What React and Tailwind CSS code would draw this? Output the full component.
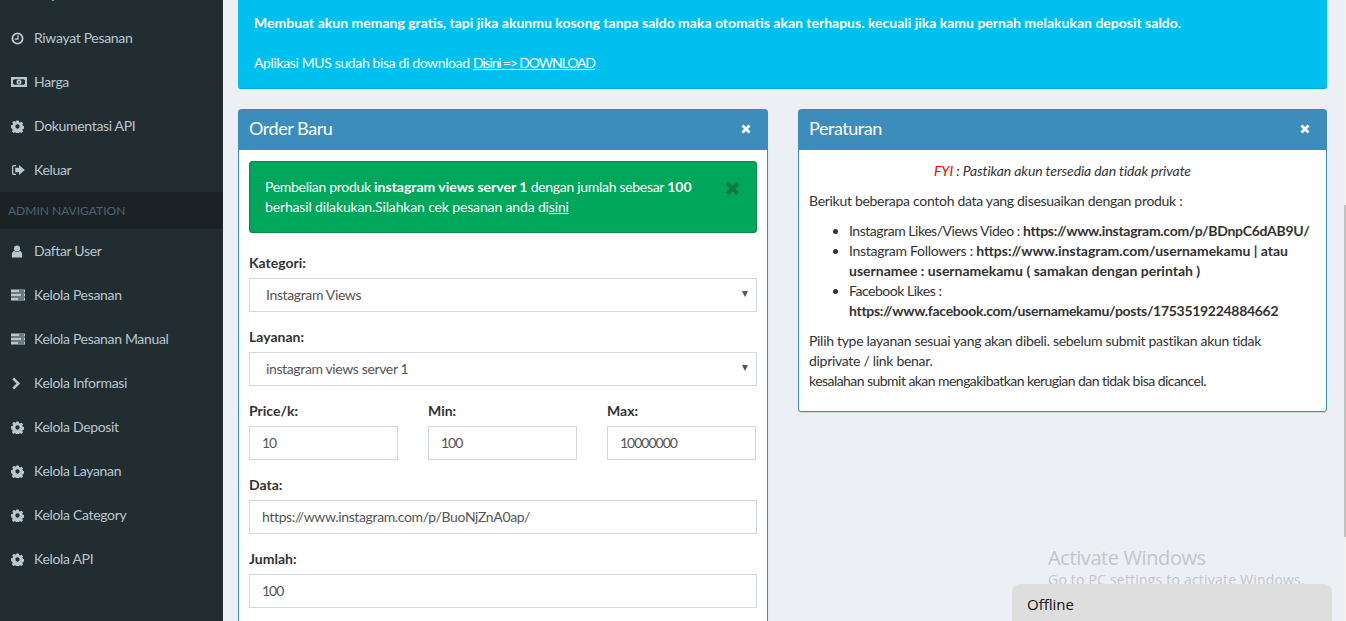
const FONT = "font-['Lato','Liberation_Sans',sans-serif]";

function Gear() {
  return (
    <svg viewBox="0 0 14 14" className="w-[13px] h-[13px]" fill="currentColor">
      <path fillRule="evenodd" d="M5.7 0.5h2.6l.4 1.7 1.1.5 1.5-.9 1.8 1.8-.9 1.5.5 1.1 1.7.4v2.6l-1.7.4-.5 1.1.9 1.5-1.8 1.8-1.5-.9-1.1.5-.4 1.7H5.7l-.4-1.7-1.1-.5-1.5.9-1.8-1.8.9-1.5-.5-1.1L0 8.3V5.7l1.7-.4.5-1.1-.9-1.5 1.8-1.8 1.5.9 1.1-.5zM7 4.7a2.3 2.3 0 1 0 0 4.6 2.3 2.3 0 0 0 0-4.6z" />
    </svg>
  );
}

function Clock() {
  return (
    <svg viewBox="0 0 14 14" className="w-[13px] h-[13px]" fill="none" stroke="currentColor">
      <circle cx="7" cy="7" r="5.5" strokeWidth="2" />
      <path d="M7.5 3.5V7.5H4" strokeWidth="1.5" />
    </svg>
  );
}

function Money() {
  return (
    <svg viewBox="0 0 16 12" className="w-[16px] h-[12px]" fill="currentColor">
      <path fillRule="evenodd" d="M0 1h16v10H0zM3 3.2a1.5 1.5 0 0 1-1 1v3.6a1.5 1.5 0 0 1 1 1h10a1.5 1.5 0 0 1 1-1V4.2a1.5 1.5 0 0 1-1-1zM8 3.5a2.5 2.5 0 1 1 0 5 2.5 2.5 0 0 1 0-5z" />
      <path d="M7.5 5h1v2.5h-1z" fill="#222d32" />
    </svg>
  );
}

function Logout() {
  return (
    <svg viewBox="0 0 14 12" className="w-[14px] h-[12px]" fill="currentColor">
      <path d="M5 1H2.5A1.5 1.5 0 0 0 1 2.5v7A1.5 1.5 0 0 0 2.5 11H5V9.7H2.5l-.2-.2V2.5l.2-.2H5z" />
      <path d="M8 1 13.8 6 8 11V8.2H4.2V3.8H8z" />
    </svg>
  );
}

function User() {
  return (
    <svg viewBox="0 0 12 14" className="w-[12px] h-[13px]" fill="currentColor">
      <circle cx="6" cy="3.8" r="3.3" />
      <path d="M0.5 13.5V10c0-2 1.3-3.3 2.8-3.5C4 7 5 7.5 6 7.5S8 7 8.7 6.5c1.5.2 2.8 1.5 2.8 3.5v3.5z" />
    </svg>
  );
}

function Tasks() {
  return (
    <svg viewBox="0 0 14 12" className="w-[14px] h-[12px]" fill="currentColor">
      <path fillRule="evenodd" d="M0 0.5h14v3H0zM8 1.5v1h5v-1zM0 4.5h14v3H0zM10 5.5v1h3v-1zM0 8.5h14v3H0zM7 9.5v1h6v-1z" />
    </svg>
  );
}

function Chevron() {
  return (
    <svg viewBox="0 0 10 14" className="w-[10px] h-[13px]" fill="none" stroke="currentColor" strokeWidth="2.8">
      <path d="M2 1.5 7.5 7 2 12.5" />
    </svg>
  );
}

function Times({ className }) {
  return (
    <svg viewBox="0 0 10 10" className={className} fill="none" stroke="currentColor" strokeWidth="2.8">
      <path d="M1.5 1.5 8.5 8.5M8.5 1.5 1.5 8.5" />
    </svg>
  );
}

function MenuItem({ icon, label }) {
  return (
    <a className="flex items-center h-[44px] pl-[11px] text-[#b8c7ce] text-[14px] tracking-[-0.33px]">
      <span className="w-[23px] flex items-center">{icon}</span>
      <span className="pb-[2px]">{label}</span>
    </a>
  );
}

function Field({ label, children }) {
  return (
    <div className="mb-[15px]">
      <label className="block font-bold text-[14px] leading-[20px] mb-[5px] text-[#333] tracking-normal">{label}</label>
      {children}
    </div>
  );
}

function TextBox({ value, numeric }) {
  return (
    <div className={`h-[34px] border border-[#d2d6de] px-[12px] pb-[2px] flex items-center text-[14px] text-[#555] ${numeric ? 'tracking-[-1px]' : 'tracking-[-0.37px]'}`}>{value}</div>
  );
}

function SelectBox({ value }) {
  return (
    <div className="h-[34px] border border-[#d2d6de] pl-[16px] pr-[8px] pb-[2px] flex items-center justify-between text-[14px] text-[#555] tracking-[-0.37px]">
      <span>{value}</span>
      <span className="w-0 h-0 border-x-[3px] border-x-transparent border-t-[6px] border-t-[#555]"></span>
    </div>
  );
}

function Panel({ title, children }) {
  return (
    <div className="border border-[#3c8dbc] rounded-[3px] bg-white shadow-[0_1px_1px_rgba(0,0,0,0.1)]">
      <div className="h-[40px] bg-[#3c8dbc] text-white flex items-center justify-between pl-[10px] pr-[16px]">
        <h3 className="text-[18px] tracking-[-0.45px] pb-[4px]">{title}</h3>
        <Times className="w-[10px] h-[10px] mb-[2px]" />
      </div>
      {children}
    </div>
  );
}

export default function App() {
  return (
    <div className={`h-[621px] w-[1346px] overflow-hidden flex bg-[#ecf0f5] ${FONT}`}>
      <aside className="w-[223px] shrink-0 bg-[#222d32] -mt-[28px]">
        <MenuItem icon={<Tasks />} label="Deposit" />
        <MenuItem icon={<Clock />} label="Riwayat Pesanan" />
        <MenuItem icon={<Money />} label="Harga" />
        <MenuItem icon={<Gear />} label="Dokumentasi API" />
        <MenuItem icon={<Logout />} label="Keluar" />
        <div className="h-[37px] bg-[#1a2226] text-[#4b646f] text-[12px] pl-[8px] flex items-center">ADMIN NAVIGATION</div>
        <MenuItem icon={<User />} label="Daftar User" />
        <MenuItem icon={<Tasks />} label="Kelola Pesanan" />
        <MenuItem icon={<Tasks />} label="Kelola Pesanan Manual" />
        <MenuItem icon={<Chevron />} label="Kelola Informasi" />
        <MenuItem icon={<Gear />} label="Kelola Deposit" />
        <MenuItem icon={<Gear />} label="Kelola Layanan" />
        <MenuItem icon={<Gear />} label="Kelola Category" />
        <MenuItem icon={<Gear />} label="Kelola API" />
      </aside>

      <main className="relative flex-1 min-w-0 pl-[15px] pr-[17px] text-[#333] text-[14px] tracking-[-0.3px]">
        <div className="h-[89px] bg-[#00c0ef] border-b border-[#00acd6] rounded-b-[3px] text-white pl-[16px] pt-[13px]">
          <p className="font-bold leading-[20px] mb-[20px] tracking-normal">
            Membuat akun memang gratis, tapi jika akunmu kosong tanpa saldo maka otomatis akan terhapus. kecuali jika kamu pernah melakukan deposit saldo.
          </p>
          <p className="leading-[20px] tracking-[-0.37px]">
            Aplikasi MUS sudah bisa di download <a className="underline tracking-[-1.15px]">Disini =&gt; DOWNLOAD</a>
          </p>
        </div>

        <div className="flex gap-[30px] mt-[20px] items-start">
          <div className="w-[530px] shrink-0">
            <Panel title="Order Baru">
              <div className="px-[10px] pt-[11px] pb-[10px]">
                <div className="h-[72px] mb-[20px] rounded-[3px] bg-[#00a65a] border border-[#008d4c] text-white pl-[15px] pr-[16px] py-[15px] flex justify-between">
                  <p className="leading-[20px] w-[440px]">
                    Pembelian produk <b className="tracking-normal">instagram views server 1</b> dengan jumlah sebesar <b className="tracking-normal">100</b><br />
                    <span className="tracking-[-0.15px]">berhasil dilakukan.Silahkan cek pesanan anda di<a className="underline">sini</a></span>
                  </p>
                  <Times className="w-[15px] h-[15px] text-[#0f7a47] mt-[4px]" />
                </div>
                <Field label="Kategori:"><SelectBox value="Instagram Views" /></Field>
                <Field label="Layanan:"><SelectBox value="instagram views server 1" /></Field>
                <div className="grid grid-cols-[149px_149px_149px] gap-x-[30px]">
                  <Field label="Price/k:"><TextBox value="10" numeric /></Field>
                  <Field label="Min:"><TextBox value="100" numeric /></Field>
                  <Field label="Max:"><TextBox value="10000000" numeric /></Field>
                </div>
                <Field label="Data:"><TextBox value="https://www.instagram.com/p/BuoNjZnA0ap/" /></Field>
                <Field label="Jumlah:"><TextBox value="100" numeric /></Field>
              </div>
            </Panel>
          </div>

          <div className="flex-1 min-w-0">
            <Panel title="Peraturan">
              <div className="px-[10px] pt-[11px] pb-[10px] leading-[20px]">
                <p className="italic text-center mb-[10px] tracking-[-0.1px]"><span className="text-[#ff0000]">FYI</span> : Pastikan akun tersedia dan tidak private</p>
                <p className="mb-[10px]">Berikut beberapa contoh data yang disesuaikan dengan produk :</p>
                <ul className="list-disc pl-[40px] mb-[10px]">
                  <li><span className="tracking-[-0.47px]">Instagram Likes/Views Video : </span><b>https://www.instagram.com/p/BDnpC6dAB9U/</b></li>
                  <li>Instagram Followers : <b className="tracking-normal">https://www.instagram.com/usernamekamu | atau usernamee : usernamekamu ( samakan dengan perintah )</b></li>
                  <li><span className="tracking-[-0.47px]">Facebook Likes : </span><b>https://www.facebook.com/usernamekamu/posts/1753519224884662</b></li>
                </ul>
                <p className="mb-[10px]">Pilih type layanan sesuai yang akan dibeli. sebelum submit pastikan akun tidak<br />diprivate / link benar.<br /><span className="tracking-[-0.55px]">kesalahan submit akan mengakibatkan kerugian dan tidak bisa dicancel.</span></p>
              </div>
            </Panel>
          </div>
        </div>

        <div className="absolute left-[825px] top-[545px] text-[#c4c6c9] font-['Open_Sans',sans-serif]">
          <div className="text-[20px] leading-[26px] tracking-[-0.4px]">Activate Windows</div>
          <div className="text-[14px] leading-[18px] tracking-[0.2px]">Go to PC settings to activate Windows.</div>
        </div>
        <div className="absolute left-[789px] top-[584px] w-[320px] h-[40px] rounded-t-[8px] bg-[#dedede] text-[#111] text-[15px] tracking-normal pl-[15px] pt-[9px] font-['Open_Sans',sans-serif]">Offline</div>
      </main>

      <div className="w-[2px] shrink-0 bg-[#f1f1f1]">
        <div className="mt-[205px] h-[332px] bg-[#c1c1c1]"></div>
      </div>
    </div>
  );
}
